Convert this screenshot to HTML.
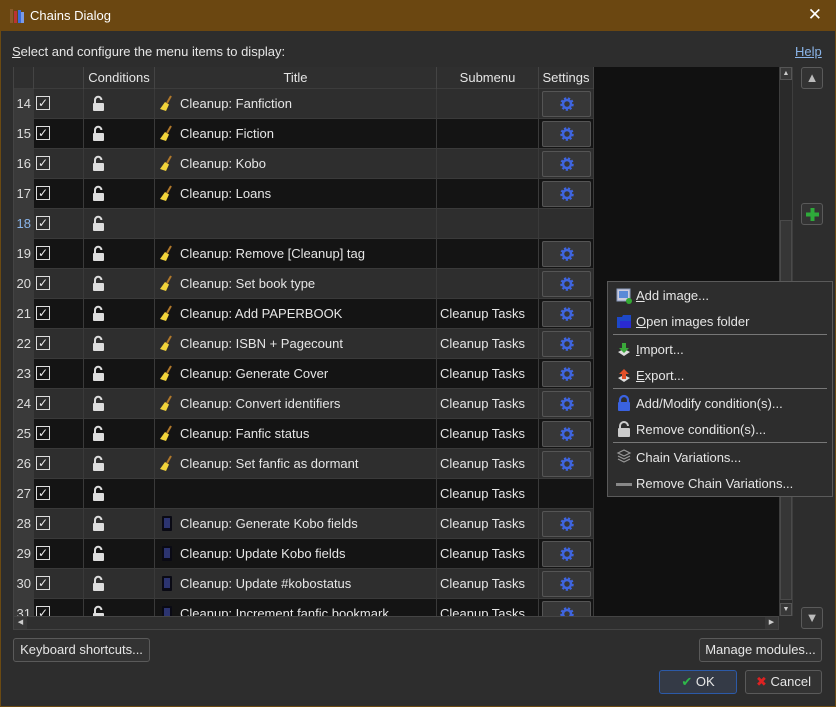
<!DOCTYPE html>
<html><head><meta charset="utf-8"><style>
*{box-sizing:border-box;margin:0;padding:0}
body{width:836px;height:707px;background:#6b4a12;font-family:"Liberation Sans","DejaVu Sans",sans-serif;font-size:13px;color:#e6e6e6;position:relative;overflow:hidden}
.win{position:absolute;left:1px;top:31px;width:834px;height:675px;background:#2d2d2d}
.tb{position:absolute;left:0;top:0;width:836px;height:31px;background:#6b4711;color:#fff}
.tb .tt{position:absolute;left:30px;top:8px;font-size:13px}
.tb .x{position:absolute;right:14px;top:5px;font-size:17px}
.ab{position:absolute}
.tbl{position:absolute;left:13px;top:67px;width:766px;height:549px;background:#111;overflow:hidden;border-left:1px solid #444}
.hd{position:absolute;left:0;top:0;width:580px;height:22px;background:#2f2f2f;border-bottom:1px solid #3c3c3c}
.hd div{position:absolute;top:0;height:22px;line-height:21px;text-align:center;border-right:1px solid #444}
.r{position:absolute;left:0;width:580px;height:30px;border-bottom:1px solid #3a3a3a}
.r>div{position:absolute;top:0;height:30px;line-height:29px;border-right:1px solid #3a3a3a}
.l{background:#2e2e2e}.d{background:#141414}
.n{left:0;width:20px;background:#3a3a3a;text-align:right;padding-right:2px;font-size:13px;color:#ddd}
.c{left:20px;width:50px}
.cb{position:absolute;left:2px;top:7px;width:14px;height:14px;border:1px solid #ddd;line-height:12px;text-align:center;font-size:12px;color:#eee}
.k{left:70px;width:71px}
.k svg{position:absolute;left:8px;top:6px}
.t{left:141px;width:282px;padding-left:25px;white-space:nowrap}
.t svg{position:absolute;left:4px;top:6px}
.s{left:423px;width:102px;padding-left:3px}
.g{left:525px;width:55px}
.btn{position:absolute;left:3px;top:2px;width:49px;height:26px;background:#373737;border:1px solid #555;border-radius:2px}
.btn svg{position:absolute;left:16px;top:4px}
.pb{position:absolute;height:24px;background:#333;border:1px solid #5a5a5a;border-radius:3px;line-height:22px;text-align:center;color:#e6e6e6}
.menu{position:absolute;left:607px;top:281px;width:226px;height:216px;background:#2d2d2d;border:1px solid #5a5a5a}
.mi{position:absolute;left:28px;height:20px;line-height:20px;white-space:nowrap}
.mi u{text-decoration:underline}
.sep{position:absolute;left:5px;width:214px;height:1px;background:#777}
.mic{position:absolute;left:8px}
</style></head><body>
<div class="tb"><svg class="ab" style="left:9px;top:8px" width="16" height="16"><rect x="1" y="1" width="3" height="14" fill="#8a5a2a"/><rect x="5" y="3" width="3" height="12" fill="#b33"/><rect x="9" y="2" width="3" height="13" fill="#3a6ad8"/><rect x="12" y="4" width="3" height="11" fill="#7a9ae8"/></svg><span class="tt">Chains Dialog</span><span class="x">✕</span></div>
<div class="win"></div>
<div class="ab" style="left:12px;top:44px"><u>S</u>elect and configure the menu items to display:</div>
<div class="ab" style="left:795px;top:44px;color:#8ab4e8;text-decoration:underline">Help</div>

<svg width="0" height="0" style="position:absolute"><defs>
<g id="lk"><path d="M3 8V5a3.2 3.2 0 0 1 6.4 0" fill="none" stroke="#ddd" stroke-width="2"/><rect x="1" y="8" width="11" height="8" rx="1" fill="#ddd"/></g>
<g id="br"><path d="M12 1L8 8" stroke="#b0782a" stroke-width="2"/><path d="M6 7L10 9.5L7 16L1 14Z" fill="#f2d43a"/></g>
<g id="kb"><rect x="3" y="1" width="10" height="15" rx="1" fill="#0a0a14"/><rect x="5" y="3" width="6" height="10" fill="#2c3470"/></g>
<g id="gr"><circle cx="8" cy="8" r="5.5" fill="none" stroke="#3f65df" stroke-width="2.5" stroke-dasharray="2.2 1.6"/><circle cx="8" cy="8" r="4" fill="none" stroke="#3f65df" stroke-width="2.5"/></g>
</defs></svg>

<div class="tbl">
<div class="hd"><div style="left:0;width:20px"></div><div style="left:20px;width:50px"></div><div style="left:70px;width:71px">Conditions</div><div style="left:141px;width:282px">Title</div><div style="left:423px;width:102px">Submenu</div><div style="left:525px;width:55px">Settings</div></div>

<div class="r l" style="top:22px"><div class="n">14</div><div class="c"><span class="cb">✓</span></div><div class="k"><svg width="13" height="17"><use href="#lk"/></svg></div><div class="t"><svg width="16" height="17"><use href="#br"/></svg>Cleanup: Fanfiction</div><div class="s"></div><div class="g"><span class="btn"><svg width="16" height="16"><use href="#gr"/></svg></span></div></div>
<div class="r d" style="top:52px"><div class="n">15</div><div class="c"><span class="cb">✓</span></div><div class="k"><svg width="13" height="17"><use href="#lk"/></svg></div><div class="t"><svg width="16" height="17"><use href="#br"/></svg>Cleanup: Fiction</div><div class="s"></div><div class="g"><span class="btn"><svg width="16" height="16"><use href="#gr"/></svg></span></div></div>
<div class="r l" style="top:82px"><div class="n">16</div><div class="c"><span class="cb">✓</span></div><div class="k"><svg width="13" height="17"><use href="#lk"/></svg></div><div class="t"><svg width="16" height="17"><use href="#br"/></svg>Cleanup: Kobo</div><div class="s"></div><div class="g"><span class="btn"><svg width="16" height="16"><use href="#gr"/></svg></span></div></div>
<div class="r d" style="top:112px"><div class="n">17</div><div class="c"><span class="cb">✓</span></div><div class="k"><svg width="13" height="17"><use href="#lk"/></svg></div><div class="t"><svg width="16" height="17"><use href="#br"/></svg>Cleanup: Loans</div><div class="s"></div><div class="g"><span class="btn"><svg width="16" height="16"><use href="#gr"/></svg></span></div></div>
<div class="r l" style="top:142px"><div class="n" style="color:#8ab4e8">18</div><div class="c"><span class="cb">✓</span></div><div class="k"><svg width="13" height="17"><use href="#lk"/></svg></div><div class="t"></div><div class="s"></div><div class="g"></div></div>
<div class="r d" style="top:172px"><div class="n">19</div><div class="c"><span class="cb">✓</span></div><div class="k"><svg width="13" height="17"><use href="#lk"/></svg></div><div class="t"><svg width="16" height="17"><use href="#br"/></svg>Cleanup: Remove [Cleanup] tag</div><div class="s"></div><div class="g"><span class="btn"><svg width="16" height="16"><use href="#gr"/></svg></span></div></div>
<div class="r l" style="top:202px"><div class="n">20</div><div class="c"><span class="cb">✓</span></div><div class="k"><svg width="13" height="17"><use href="#lk"/></svg></div><div class="t"><svg width="16" height="17"><use href="#br"/></svg>Cleanup: Set book type</div><div class="s"></div><div class="g"><span class="btn"><svg width="16" height="16"><use href="#gr"/></svg></span></div></div>
<div class="r d" style="top:232px"><div class="n">21</div><div class="c"><span class="cb">✓</span></div><div class="k"><svg width="13" height="17"><use href="#lk"/></svg></div><div class="t"><svg width="16" height="17"><use href="#br"/></svg>Cleanup: Add PAPERBOOK</div><div class="s">Cleanup Tasks</div><div class="g"><span class="btn"><svg width="16" height="16"><use href="#gr"/></svg></span></div></div>
<div class="r l" style="top:262px"><div class="n">22</div><div class="c"><span class="cb">✓</span></div><div class="k"><svg width="13" height="17"><use href="#lk"/></svg></div><div class="t"><svg width="16" height="17"><use href="#br"/></svg>Cleanup: ISBN + Pagecount</div><div class="s">Cleanup Tasks</div><div class="g"><span class="btn"><svg width="16" height="16"><use href="#gr"/></svg></span></div></div>
<div class="r d" style="top:292px"><div class="n">23</div><div class="c"><span class="cb">✓</span></div><div class="k"><svg width="13" height="17"><use href="#lk"/></svg></div><div class="t"><svg width="16" height="17"><use href="#br"/></svg>Cleanup: Generate Cover</div><div class="s">Cleanup Tasks</div><div class="g"><span class="btn"><svg width="16" height="16"><use href="#gr"/></svg></span></div></div>
<div class="r l" style="top:322px"><div class="n">24</div><div class="c"><span class="cb">✓</span></div><div class="k"><svg width="13" height="17"><use href="#lk"/></svg></div><div class="t"><svg width="16" height="17"><use href="#br"/></svg>Cleanup: Convert identifiers</div><div class="s">Cleanup Tasks</div><div class="g"><span class="btn"><svg width="16" height="16"><use href="#gr"/></svg></span></div></div>
<div class="r d" style="top:352px"><div class="n">25</div><div class="c"><span class="cb">✓</span></div><div class="k"><svg width="13" height="17"><use href="#lk"/></svg></div><div class="t"><svg width="16" height="17"><use href="#br"/></svg>Cleanup: Fanfic status</div><div class="s">Cleanup Tasks</div><div class="g"><span class="btn"><svg width="16" height="16"><use href="#gr"/></svg></span></div></div>
<div class="r l" style="top:382px"><div class="n">26</div><div class="c"><span class="cb">✓</span></div><div class="k"><svg width="13" height="17"><use href="#lk"/></svg></div><div class="t"><svg width="16" height="17"><use href="#br"/></svg>Cleanup: Set fanfic as dormant</div><div class="s">Cleanup Tasks</div><div class="g"><span class="btn"><svg width="16" height="16"><use href="#gr"/></svg></span></div></div>
<div class="r d" style="top:412px"><div class="n">27</div><div class="c"><span class="cb">✓</span></div><div class="k"><svg width="13" height="17"><use href="#lk"/></svg></div><div class="t"></div><div class="s">Cleanup Tasks</div><div class="g"></div></div>
<div class="r l" style="top:442px"><div class="n">28</div><div class="c"><span class="cb">✓</span></div><div class="k"><svg width="13" height="17"><use href="#lk"/></svg></div><div class="t"><svg width="16" height="17"><use href="#kb"/></svg>Cleanup: Generate Kobo fields</div><div class="s">Cleanup Tasks</div><div class="g"><span class="btn"><svg width="16" height="16"><use href="#gr"/></svg></span></div></div>
<div class="r d" style="top:472px"><div class="n">29</div><div class="c"><span class="cb">✓</span></div><div class="k"><svg width="13" height="17"><use href="#lk"/></svg></div><div class="t"><svg width="16" height="17"><use href="#kb"/></svg>Cleanup: Update Kobo fields</div><div class="s">Cleanup Tasks</div><div class="g"><span class="btn"><svg width="16" height="16"><use href="#gr"/></svg></span></div></div>
<div class="r l" style="top:502px"><div class="n">30</div><div class="c"><span class="cb">✓</span></div><div class="k"><svg width="13" height="17"><use href="#lk"/></svg></div><div class="t"><svg width="16" height="17"><use href="#kb"/></svg>Cleanup: Update #kobostatus</div><div class="s">Cleanup Tasks</div><div class="g"><span class="btn"><svg width="16" height="16"><use href="#gr"/></svg></span></div></div>
<div class="r d" style="top:532px"><div class="n">31</div><div class="c"><span class="cb">✓</span></div><div class="k"><svg width="13" height="17"><use href="#lk"/></svg></div><div class="t"><svg width="16" height="17"><use href="#kb"/></svg>Cleanup: Increment fanfic bookmark</div><div class="s">Cleanup Tasks</div><div class="g"><span class="btn"><svg width="16" height="16"><use href="#gr"/></svg></span></div></div>
</div>

<div class="ab" style="left:779px;top:67px;width:14px;height:549px;background:#2a2a2a;border:1px solid #3e3e3e"></div>
<div class="ab" style="left:780px;top:67px;width:12px;height:13px;background:#383838;border:1px solid #555;color:#ccc;font-size:7px;text-align:center;line-height:11px">▲</div>
<div class="ab" style="left:780px;top:220px;width:12px;height:380px;background:#363636;border:1px solid #4a4a4a"></div>
<div class="ab" style="left:780px;top:603px;width:12px;height:13px;background:#383838;border:1px solid #555;color:#ccc;font-size:7px;text-align:center;line-height:11px">▼</div>
<div class="ab" style="left:13px;top:616px;width:766px;height:14px;background:#2f2f2f;border:1px solid #444"></div>
<div class="ab" style="left:14px;top:617px;width:13px;height:12px;background:#383838;color:#ccc;font-size:7px;text-align:center;line-height:12px">◀</div>
<div class="ab" style="left:765px;top:617px;width:13px;height:12px;background:#383838;color:#ccc;font-size:7px;text-align:center;line-height:12px">▶</div>

<div class="pb" style="left:801px;top:67px;width:22px;height:22px;color:#bbb;font-size:13px;line-height:20px">▲</div>
<div class="pb" style="left:801px;top:203px;width:22px;height:22px"><svg class="ab" style="left:3px;top:3px" width="15" height="15"><rect x="5.5" y="1" width="4" height="13" fill="#2eaa3a"/><rect x="1" y="5.5" width="13" height="4" fill="#2eaa3a"/></svg></div>
<div class="pb" style="left:801px;top:607px;width:22px;height:22px;color:#bbb;font-size:13px;line-height:20px">▼</div>

<div class="pb" style="left:13px;top:638px;width:137px">Keyboard shortcuts...</div>
<div class="pb" style="left:699px;top:638px;width:123px">Manage modules...</div>
<div class="pb" style="left:659px;top:670px;width:78px;background:#343a46;border-color:#2c5aa8"><span style="color:#2eb84a;font-weight:bold">✔</span> OK</div>
<div class="pb" style="left:745px;top:670px;width:77px"><span style="color:#d22;font-weight:bold">✖</span> Cancel</div>

<div class="menu">
<svg class="mic" style="top:6px" width="16" height="16"><rect x="1" y="1" width="13" height="12" fill="#ccd" stroke="#8899bb"/><rect x="3" y="3" width="9" height="7" fill="#5a8ad8"/><circle cx="13" cy="13" r="3" fill="#3a3"/></svg>
<div class="mi" style="top:4px"><u>A</u>dd image...</div>
<svg class="mic" style="top:31px" width="16" height="16"><path d="M1 4h5l1-2h8v13H1z" fill="#1d48c8"/><rect x="4" y="8" width="11" height="7" fill="#2a2ad0"/></svg>
<div class="mi" style="top:30px"><u>O</u>pen images folder</div>
<div class="sep" style="top:52px"></div>
<svg class="mic" style="top:60px" width="16" height="16"><path d="M2 10l6 4 6-4-6-3z" fill="#ddd"/><path d="M6 1h4v5h3l-5 5-5-5h3z" fill="#3aa83a"/></svg>
<div class="mi" style="top:58px"><u>I</u>mport...</div>
<svg class="mic" style="top:86px" width="16" height="16"><path d="M2 10l6 4 6-4-6-3z" fill="#ddd"/><path d="M6 11h4V6h3L8 1 3 6h3z" fill="#e2502a"/></svg>
<div class="mi" style="top:84px"><u>E</u>xport...</div>
<div class="sep" style="top:106px"></div>
<svg class="mic" style="top:112px" width="16" height="18"><path d="M4 9V6a4 4 0 0 1 8 0v3" fill="none" stroke="#3a62e0" stroke-width="2.2"/><rect x="2" y="8" width="12" height="9" rx="1" fill="#3a62e0"/></svg>
<div class="mi" style="top:112px">Add/Modify condition(s)...</div>
<svg class="mic" style="top:138px" width="16" height="18"><path d="M4 9V6a4 4 0 0 1 8 0" fill="none" stroke="#ccc" stroke-width="2"/><rect x="2" y="8" width="12" height="9" rx="1" fill="#ccc"/></svg>
<div class="mi" style="top:138px">Remove condition(s)...</div>
<div class="sep" style="top:160px"></div>
<svg class="mic" style="top:166px" width="16" height="16"><path d="M8 2l6 3-6 3-6-3z M2 8l6 3 6-3 M2 11l6 3 6-3" fill="none" stroke="#999" stroke-width="1.2"/></svg>
<div class="mi" style="top:166px">Chain Variations...</div>
<div class="ab" style="left:8px;top:201px;width:16px;height:3px;background:#888"></div>
<div class="mi" style="top:192px">Remove Chain Variations...</div>
</div>
</body></html>
